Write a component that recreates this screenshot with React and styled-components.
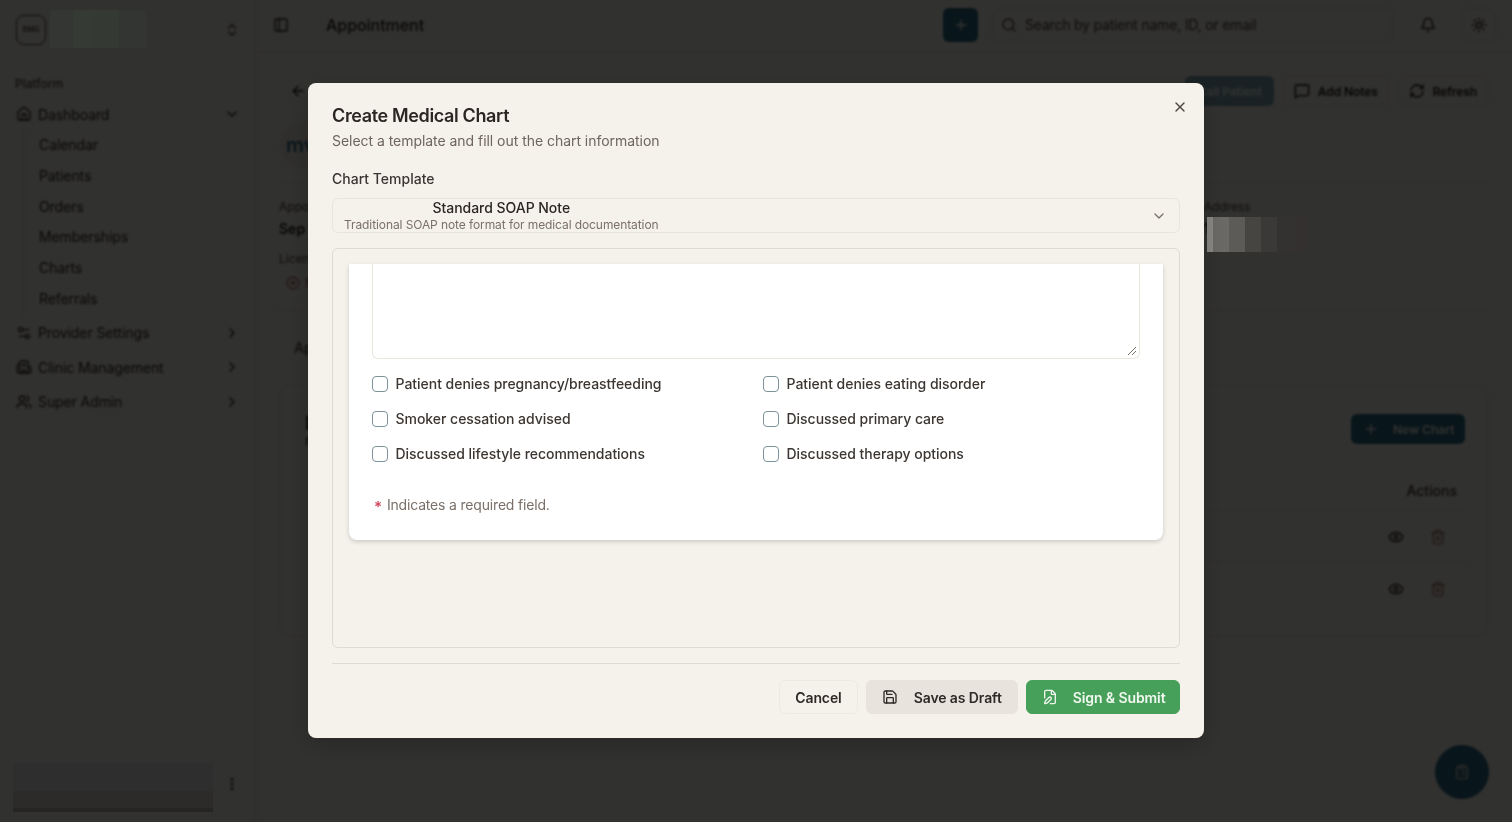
import React from "react";
import styled, { createGlobalStyle } from "styled-components";
import {
  ChevronsUpDown, House, ChevronDown, ChevronRight, Settings2, Hospital, Users, PanelLeft,
  ArrowLeft, Plus, Search, Bell, Sun, MessageSquare, RefreshCw, X, Save, FilePen, Eye, Trash2,
  ClipboardList, EllipsisVertical, CircleX,
} from "lucide-react";

const Global = createGlobalStyle`
  html, body, #root { margin: 0; height: 100%; overflow: hidden; }
  body { font-family: Inter, "Noto Sans", "Liberation Sans", sans-serif; background: #f5f2ec; color: #3c3835; }
  * { box-sizing: border-box; }
`;

const Shell = styled.div`display: flex; height: 822px; width: 1512px; transform: translateZ(0);`;

const Sidebar = styled.aside`
  width: 256px; flex: none; display: flex; flex-direction: column; border-right: 1px solid #e4e0d8;
  padding: 0 15px 10px 15px;
`;
const Brand = styled.div`display: flex; align-items: center; justify-content: space-between; height: 59px;`;
const Logo = styled.div`
  width: 30px; height: 30px; margin-left: 1px; border: 1.5px solid #4c4844; border-radius: 8px; display: flex; align-items: center;
  justify-content: center; font-size: 7px; font-weight: 600; color: #4c4844;
`;
const GroupLabel = styled.div`font-size: 12px; font-weight: 500; height: 16px; line-height: 16px; margin-top: 17px; color: #4c4844;`;
const MenuItem = styled.div`
  display: flex; align-items: center; gap: 6px; height: 32px; font-size: 14px; letter-spacing: -0.1px; color: #2c2a27; margin-bottom: 2.5px;
  svg:first-child { margin-left: 1px; }
  span { flex: 1; }
`;
const FirstMenu = styled(MenuItem)`margin-top: 6px; margin-bottom: 0;`;
const SubList = styled.div`
  display: flex; flex-direction: column; margin: 0 0 1px 8px; padding: 0 0 1px 15px; border-left: 1px solid #e4e0d8;
`;
const SubItem = styled.div`height: 30.75px; line-height: 30.75px; font-size: 14px; letter-spacing: -0.1px; color: #2c2a27;`;
const SideFoot = styled.div`margin-top: auto; height: 49px; padding-bottom: 8px; display: flex; align-items: center; justify-content: flex-end; color: #1c1a18;`;

const Main = styled.main`flex: 1; min-width: 0; display: flex; flex-direction: column;`;
const Topbar = styled.header`
  height: 52px; flex: none; display: flex; align-items: center; border-bottom: 1px solid #e4e0d8; padding: 0 16px 1px 17px; color: #2c2a27;
`;
const PageTitle = styled.h1`font-size: 16px; font-weight: 500; letter-spacing: -0.05px; margin: 0 0 0 37px; color: #2c2a27; flex: 1;`;
const PlusButton = styled.div`
  width: 35px; height: 34px; border-radius: 6px; background: #2c6a82; color: #fff; display: flex; align-items: center; justify-content: center;
`;
const SearchBox = styled.div`
  width: 401px; height: 34px; margin-left: 14px; border: 1px solid #e4e0d8; border-radius: 6px; display: flex; align-items: center; gap: 8px;
  padding: 0 0 1px 8px; font-size: 14px; letter-spacing: -0.2px; color: #4e4440;
`;
const TopIcon = styled.div`
  width: 34px; height: 34px; display: flex; align-items: center; justify-content: center; margin-left: ${(p) => p.$gap}px; border-radius: 6px;
  border: 1px solid ${(p) => (p.$outlined ? "#e4e0d8" : "transparent")}; color: #1c1a18;
`;
const Content = styled.div`padding: 24px 24px 0 23px; flex: 1;`;
const ActionBar = styled.div`display: flex; align-items: center; height: 30px; gap: 9px;`;
const BackLink = styled.div`margin: 0 auto 0 11px; display: flex; color: #1c1a18;`;
const GhostButton = styled.div`
  display: flex; align-items: center; gap: 8px; height: 30px; padding: 0 10px; border: 1px solid #eae6de; border-radius: 6px;
  font-size: 12px; font-weight: 600; letter-spacing: -0.1px; color: #1c1a18;
`;
const CallButton = styled(GhostButton)`width: 89px; padding: 0 12px 0 0; background: #7ea6b2; color: #f5f2ec; border: 0; justify-content: flex-end;`;
const Profile = styled.div`height: 77px; padding: 16px 0 15px 1px; border-bottom: 1px solid #e4e0d8;`;
const Avatar = styled.div`
  width: 46px; height: 46px; border-radius: 50%; background: #ebe7df; color: #2a6a84; font-size: 20px; font-weight: 600; display: flex;
  align-items: center; padding-left: 6px;
`;
const Details = styled.div`
  display: grid; grid-template-columns: repeat(4, 1fr); grid-auto-rows: 52px; gap: 0 24px; padding-top: 16px; height: 127px; border-bottom: 1px solid #e4e0d8;
`;
const Detail = styled.div`display: flex; flex-direction: column;`;
const DetailLabel = styled.div`font-size: 12px; line-height: 16px; color: #4c4844;`;
const DetailValue = styled.div`font-size: 14px; line-height: 20px; font-weight: 600; margin-top: 4px; color: #1c1a18;`;
const Status = styled.div`display: flex; align-items: center; gap: 5px; margin: 8px 0 0 7px; font-size: 12px; color: #9c5a55;`;
const Tabs = styled.div`height: 75px; display: flex; align-items: center; padding: 0 0 0 15px; font-size: 14px; font-weight: 500; color: #4c4844;`;
const Card = styled.section`height: 252px; border: 1px solid #e4e0d8; border-radius: 12px; padding: 28px 22px 0 24px;`;
const CardHead = styled.div`display: flex; justify-content: space-between; height: 30px;`;
const CardTitle = styled.div`font-size: 18px; font-weight: 600; line-height: 20px; padding-left: 1px; color: #1c1a18;`;
const CardSub = styled.div`font-size: 12px; padding-left: 1px; color: #2c2a27;`;
const PrimarySmall = styled.div`
  width: 114px; height: 30px; border-radius: 6px; background: #2c6a82; color: #f5f2ec; display: flex; align-items: center; gap: 14px;
  padding-left: 12px; font-size: 12px; font-weight: 600;
`;
const TableHead = styled.div`
  height: 42px; margin-top: 25px; display: flex; align-items: center; justify-content: flex-end; padding: 1px 8px 0 0; font-size: 14px; font-weight: 500;
  color: #3e3530; border-bottom: 1px solid #e4e0d8;
`;
const TableRow = styled.div`
  height: 52px; display: flex; align-items: center; justify-content: flex-end; gap: 26px; padding: 0 19px 0 0; border-bottom: ${(p) => (p.$last ? "0" : "1px solid #e4e0d8")};
  color: #1c1a18;
`;
const TrashIcon = styled(Trash2)`color: #a0766e;`;
const Fab = styled.div`
  position: fixed; right: 23px; bottom: 23px; width: 54px; height: 54px; border-radius: 50%; background: #2c6a82; color: #d8d6d0; display: flex;
  align-items: center; justify-content: center;
`;

const Overlay = styled.div`
  position: fixed; inset: 0; background: rgba(0, 0, 0, 0.8); backdrop-filter: blur(1px); display: flex; align-items: center; justify-content: center;
  padding-bottom: 1px;
`;
const Redaction = styled.div`
  position: absolute; left: ${(p) => p.$x}px; top: ${(p) => p.$y}px; width: ${(p) => p.$w}px; height: ${(p) => p.$h}px; background: ${(p) => p.$bg};
`;
const Modal = styled.div`
  position: relative; width: 896px; height: 655px; background: #f5f2ec; border-radius: 8px; padding: 22px 24px 24px; display: flex; flex-direction: column;
  box-shadow: 0 8px 24px rgba(0, 0, 0, 0.2);
`;
const Close = styled.div`position: absolute; top: 16px; right: 16px; display: flex; color: #4c4641;`;
const Title = styled.h2`margin: 0; font-size: 18px; line-height: 22px; font-weight: 600; letter-spacing: -0.36px; color: #2c2622;`;
const Description = styled.p`margin: 4px 0 0; font-size: 14px; line-height: 20px; letter-spacing: -0.04px; color: #6e655e;`;
const FieldLabel = styled.label`margin-top: 18px; font-size: 14px; line-height: 20px; font-weight: 500; color: #3c3632;`;
const Select = styled.div`
  height: 35px; margin-top: 9px; flex: none; border: 1px solid #e9e5dd; border-radius: 6px; display: flex; align-items: center; justify-content: space-between;
  padding: 0 12px 0 11px; color: #7a7069; overflow: hidden;
`;
const SelectText = styled.div`display: flex; flex-direction: column; align-items: center;`;
const SelectName = styled.div`font-size: 14px; line-height: 18px; font-weight: 500; letter-spacing: -0.03px; color: #2c2622;`;
const SelectHint = styled.div`font-size: 12px; line-height: 16px; letter-spacing: -0.09px; color: #7a7069;`;
const ScrollFrame = styled.div`
  height: 400px; margin-top: 15px; flex: none; border: 1px solid #dfdad2; border-radius: 6px; padding: 15px 16px 0;
`;
const FormCard = styled.div`
  background: #fff; border-radius: 0 0 8px 8px; padding: 0 23px 24px; height: 276px; box-shadow: 0 2px 4px rgba(0, 0, 0, 0.16); display: flex; flex-direction: column;
`;
const TextArea = styled.div`
  position: relative; height: 95px; flex: none; border: 1px solid #e9e6e0; border-top: 0; border-radius: 0 0 6px 6px; color: #77716a;
  svg { position: absolute; right: 2px; bottom: 2px; }
`;
const CheckGrid = styled.div`display: grid; grid-template-columns: 391px 1fr; row-gap: 15px; margin-top: 15px;`;
const CheckRow = styled.label`display: flex; align-items: center; gap: 7.5px; font-size: 14px; line-height: 20px; font-weight: 500; letter-spacing: -0.03px; color: #3c3632;`;
const CheckBox = styled.span`width: 16px; height: 16px; border: 1.5px solid #7d929b; border-radius: 4px; background: #fff; flex: none;`;
const Required = styled.div`display: flex; align-items: center; gap: 5px; margin-top: 31px; padding-left: 2px; font-size: 14px; line-height: 20px; letter-spacing: -0.18px; color: #7a7069;`;
const Star = styled.span`color: #d0475c; font-size: 15px; font-weight: 600; position: relative; top: 2px;`;
const Footer = styled.div`
  margin-top: 15px; border-top: 1px solid #dfdad2; padding-top: 16px; display: flex; justify-content: flex-end; gap: 8px;
`;
const FootButton = styled.button`
  height: 34px; display: flex; align-items: center; gap: 15px; padding: 0 15px; border-radius: 6px; border: 1px solid #eee9e2; background: #f5f2ec;
  font: 600 14px Inter, sans-serif; letter-spacing: -0.1px; color: #2f2a26;
`;
const DraftButton = styled(FootButton)`background: #e8e3dc; border-color: #e8e3dc; gap: 16px;`;
const SignButton = styled(FootButton)`background: #46a05a; border-color: #46a05a; color: #f1f7ee; padding-right: 13.5px;`;

const MODAL_CHECKS = [
  "Patient denies pregnancy/breastfeeding", "Patient denies eating disorder",
  "Smoker cessation advised", "Discussed primary care",
  "Discussed lifestyle recommendations", "Discussed therapy options",
];
const SUBS = ["Calendar", "Patients", "Orders", "Memberships", "Charts", "Referrals"];
const GROUPS = [[Settings2, "Provider Settings"], [Hospital, "Clinic Management"], [Users, "Super Admin"]];

export default function App() {
  return (
    <>
      <Global />
      <Shell>
        <Sidebar>
          <Brand>
            <Logo>BMG</Logo>
            <ChevronsUpDown size={16} />
          </Brand>
          <GroupLabel>Platform</GroupLabel>
          <FirstMenu><House size={16} /><span>Dashboard</span><ChevronDown size={16} /></FirstMenu>
          <SubList>{SUBS.map((s) => <SubItem key={s}>{s}</SubItem>)}</SubList>
          {GROUPS.map(([Icon, name]) => (
            <MenuItem key={name}><Icon size={16} /><span>{name}</span><ChevronRight size={16} /></MenuItem>
          ))}
          <SideFoot><EllipsisVertical size={16} /></SideFoot>
        </Sidebar>
        <Main>
          <Topbar>
            <PanelLeft size={16} />
            <PageTitle>Appointment</PageTitle>
            <PlusButton><Plus size={16} /></PlusButton>
            <SearchBox><Search size={16} />Search by patient name, ID, or email</SearchBox>
            <TopIcon $gap={18}><Bell size={16} /></TopIcon>
            <TopIcon $gap={17} $outlined><Sun size={16} /></TopIcon>
          </Topbar>
          <Content>
            <ActionBar>
              <BackLink><ArrowLeft size={16} /></BackLink>
              <CallButton>Call Patient</CallButton>
              <GhostButton><MessageSquare size={16} />Add Notes</GhostButton>
              <GhostButton><RefreshCw size={16} />Refresh</GhostButton>
            </ActionBar>
            <Profile><Avatar>mv</Avatar></Profile>
            <Details>
              <Detail><DetailLabel>Appointment</DetailLabel><DetailValue>Sep 12</DetailValue></Detail>
              <Detail /><Detail />
              <Detail><DetailLabel>Address</DetailLabel><DetailValue>1</DetailValue></Detail>
              <Detail><DetailLabel>License</DetailLabel><Status><CircleX size={14} />Not</Status></Detail>
            </Details>
            <Tabs>Appointments</Tabs>
            <Card>
              <CardHead>
                <div><CardTitle>Medical</CardTitle><CardSub>Manage</CardSub></div>
                <PrimarySmall><Plus size={16} />New Chart</PrimarySmall>
              </CardHead>
              <TableHead>Actions</TableHead>
              <TableRow><Eye size={16} /><TrashIcon size={16} /></TableRow>
              <TableRow $last><Eye size={16} /><TrashIcon size={16} /></TableRow>
            </Card>
          </Content>
        </Main>
        <Fab><ClipboardList size={16} /></Fab>
      </Shell>
      <Overlay>
        <Redaction $x={50} $y={10} $w={96} $h={38} $bg="linear-gradient(90deg, #333632 0 24%, #353a34 24% 46%, #343934 46% 72%, #323532 72% 100%)" />
        <Redaction $x={13} $y={763} $w={200} $h={49} $bg="linear-gradient(180deg, #2e2e2f 0 58%, #2c2b2a 58% 92%, #262524 92% 100%)" />
        <Redaction $x={1207} $y={217} $w={100} $h={35} $bg="linear-gradient(90deg, #8b8985 0 6%, #6b6a66 6% 22%, #5c5b57 22% 38%, #464542 38% 54%, #3a3937 54% 70%, #343230 70% 88%, #33302f 88% 100%)" />
        <Modal>
          <Close><X size={16} /></Close>
          <Title>Create Medical Chart</Title>
          <Description>Select a template and fill out the chart information</Description>
          <FieldLabel>Chart Template</FieldLabel>
          <Select>
            <SelectText>
              <SelectName>Standard SOAP Note</SelectName>
              <SelectHint>Traditional SOAP note format for medical documentation</SelectHint>
            </SelectText>
            <ChevronDown size={16} />
          </Select>
          <ScrollFrame>
            <FormCard>
              <TextArea>
                <svg width="10" height="10" viewBox="0 0 10 10" fill="none" stroke="currentColor" strokeWidth="1">
                  <path d="M1 9 9 1M5 9 9 5" />
                </svg>
              </TextArea>
              <CheckGrid>
                {MODAL_CHECKS.map((c) => <CheckRow key={c}><CheckBox />{c}</CheckRow>)}
              </CheckGrid>
              <Required><Star>*</Star>Indicates a required field.</Required>
            </FormCard>
          </ScrollFrame>
          <Footer>
            <FootButton>Cancel</FootButton>
            <DraftButton><Save size={16} />Save as Draft</DraftButton>
            <SignButton><FilePen size={16} />Sign &amp; Submit</SignButton>
          </Footer>
        </Modal>
      </Overlay>
    </>
  );
}
